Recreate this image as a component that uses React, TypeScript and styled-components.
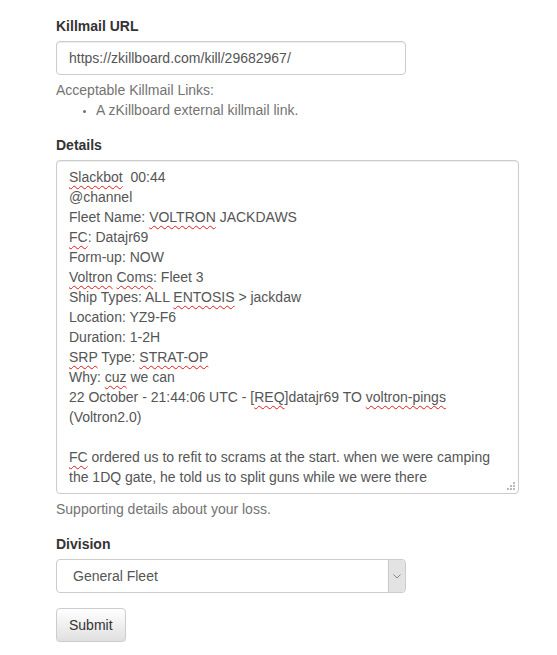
import React from "react";
import styled, { createGlobalStyle } from "styled-components";

const GlobalStyle = createGlobalStyle`
  * { box-sizing: border-box; }
  body {
    margin: 0;
    background: #fff;
    font-family: "Liberation Sans", Arial, Helvetica, sans-serif;
    font-size: 14px;
    line-height: 20px;
    color: #333;
  }
`;

const Page = styled.div`
  padding: 16px 0 0 56px;
`;

const FormGroup = styled.div`
  margin-bottom: 15px;
`;

const Label = styled.label`
  display: block;
  font-weight: bold;
  margin-bottom: 5px;
  color: #333;
`;

const TextInput = styled.div<{ $width: number }>`
  width: ${(p) => p.$width}px;
  height: 34px;
  padding: 6px 12px;
  border: 1px solid #ccc;
  border-radius: 4px;
  color: #555;
  box-shadow: inset 0 1px 1px rgba(0, 0, 0, 0.075);
  background: #fff;
`;

const HelpBlock = styled.div`
  margin-top: 5px;
  color: #737373;
`;

const HelpList = styled.ul`
  margin: 0;
  padding-left: 40px;
  list-style: disc;
  li::marker { font-size: 10px; }
`;

const TextAreaBox = styled.div`
  position: relative;
  width: 463px;
  height: 334px;
  padding: 6px 12px;
  border: 1px solid #ccc;
  border-radius: 4px;
  color: #555;
  box-shadow: inset 0 1px 1px rgba(0, 0, 0, 0.075);
  background: #fff;
  overflow: hidden;
  white-space: pre-wrap;
`;

const Squiggle = styled.span`
  text-decoration: underline wavy #e21a1a;
  text-decoration-thickness: 1px;
  text-underline-offset: 3px;
  text-decoration-skip-ink: none;
`;

const Grip = styled.svg`
  position: absolute;
  right: 2px;
  bottom: 2px;
`;

const SelectBox = styled.div`
  display: flex;
  width: 350px;
  height: 34px;
  border: 1px solid #ccc;
  border-radius: 4px;
  background: #fff;
  color: #555;
  overflow: hidden;
`;

const SelectText = styled.div`
  flex: 1;
  padding: 6px 16px;
`;

const ArrowBox = styled.div`
  width: 17px;
  display: flex;
  align-items: center;
  justify-content: center;
  background: #e3e3e3;
  border-left: 1px solid #c9c9c9;
`;

const Button = styled.button`
  height: 34px;
  padding: 6px 12px;
  font-family: inherit;
  font-size: 14px;
  line-height: 20px;
  color: #333;
  border: 1px solid #ccc;
  border-radius: 4px;
  background: linear-gradient(to bottom, #fff 0%, #e0e0e0 100%);
  box-shadow: inset 0 1px 0 rgba(255, 255, 255, 0.15), 0 1px 1px rgba(0, 0, 0, 0.075);
`;

export default function App() {
  return (
    <>
      <GlobalStyle />
      <Page>
        <FormGroup>
          <Label>Killmail URL</Label>
          <TextInput $width={350}>https://zkillboard.com/kill/29682967/</TextInput>
          <HelpBlock>
            Acceptable Killmail Links:
            <HelpList>
              <li>A zKillboard external killmail link.</li>
            </HelpList>
          </HelpBlock>
        </FormGroup>
        <FormGroup>
          <Label>Details</Label>
          <TextAreaBox>
            <Squiggle>Slackbot</Squiggle>{"  00:44\n@channel\nFleet Name: "}
            <Squiggle>VOLTRON</Squiggle>{" JACKDAWS\n"}
            <Squiggle>FC</Squiggle>{": Datajr69\nForm-up: NOW\n"}
            <Squiggle>Voltron</Squiggle>{" "}
            <Squiggle>Coms</Squiggle>{": Fleet 3\nShip Types: ALL "}
            <Squiggle>ENTOSIS</Squiggle>{" > jackdaw\nLocation: YZ9-F6\nDuration: 1-2H\n"}
            <Squiggle>SRP</Squiggle>{" Type: "}
            <Squiggle>STRAT-OP</Squiggle>{"\nWhy: "}
            <Squiggle>cuz</Squiggle>{" we can\n22 October - 21:44:06 UTC - ["}
            <Squiggle>REQ</Squiggle>{"]datajr69 TO "}
            <Squiggle>voltron-pings</Squiggle>{" (Voltron2.0)\n\n"}
            <Squiggle>FC</Squiggle>
            {" ordered us to refit to scrams at the start. when we were camping the 1DQ gate, he told us to split guns while we were there"}
            <Grip width="10" height="10" viewBox="0 0 10 10">
              <rect x="7" y="1" width="2" height="2" fill="#bbb" />
              <rect x="4" y="4" width="2" height="2" fill="#bbb" />
              <rect x="7" y="4" width="2" height="2" fill="#bbb" />
              <rect x="1" y="7" width="2" height="2" fill="#bbb" />
              <rect x="4" y="7" width="2" height="2" fill="#bbb" />
              <rect x="7" y="7" width="2" height="2" fill="#bbb" />
            </Grip>
          </TextAreaBox>
          <HelpBlock>Supporting details about your loss.</HelpBlock>
        </FormGroup>
        <FormGroup>
          <Label>Division</Label>
          <SelectBox>
            <SelectText>General Fleet</SelectText>
            <ArrowBox>
              <svg width="8" height="5" viewBox="0 0 8 5">
                <path d="M0.5 0.5 L4 4 L7.5 0.5" fill="none" stroke="#888" strokeWidth="1" />
              </svg>
            </ArrowBox>
          </SelectBox>
        </FormGroup>
        <Button>Submit</Button>
      </Page>
    </>
  );
}
